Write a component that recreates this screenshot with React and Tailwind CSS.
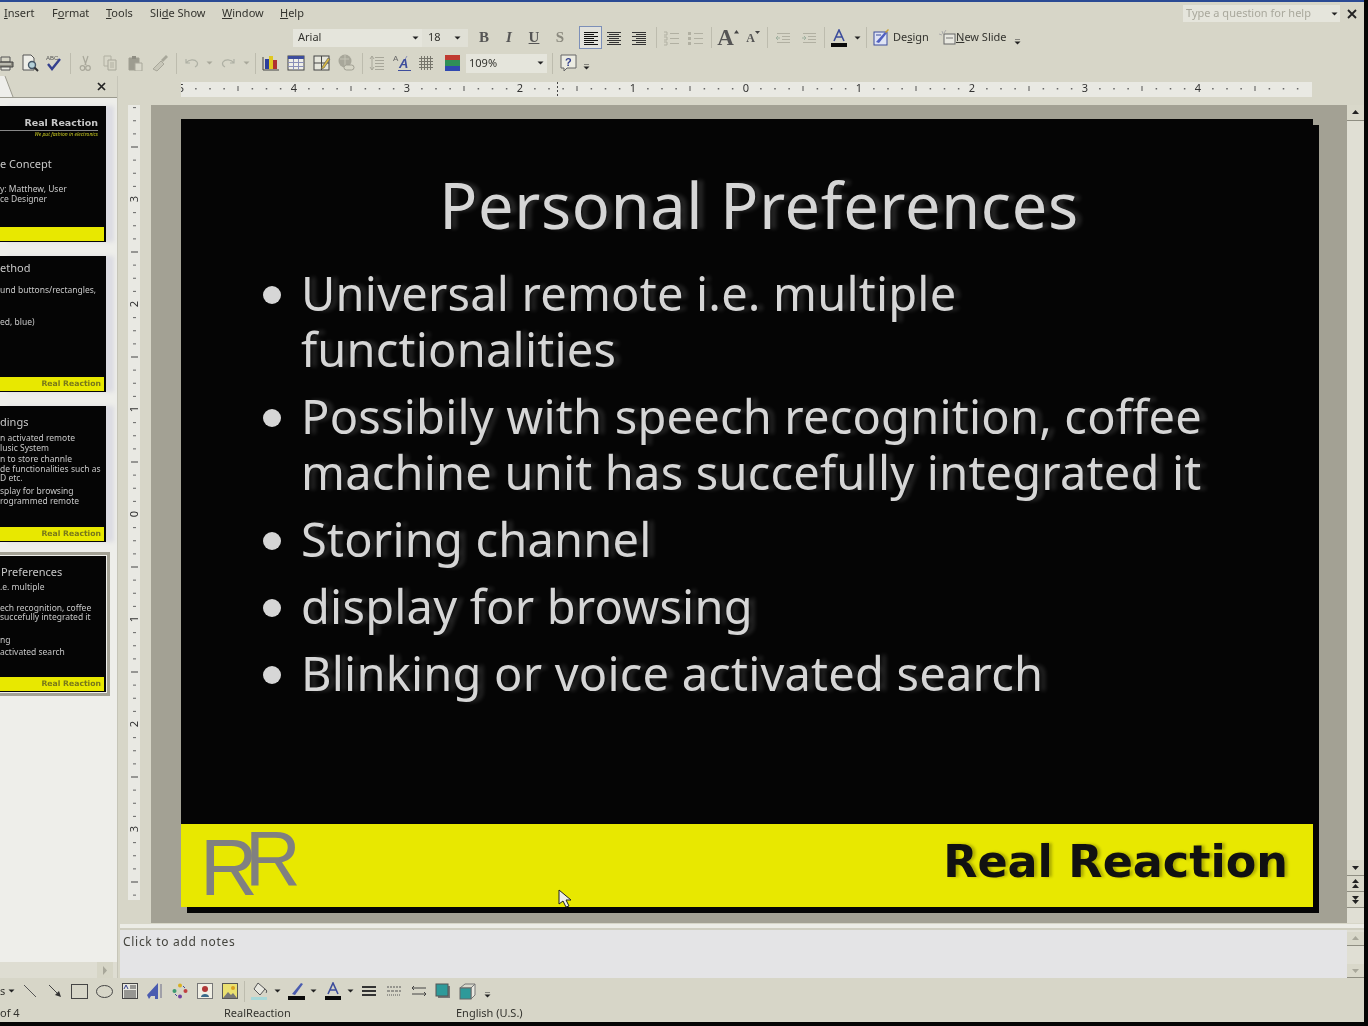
const Svg = ({ w = 16, h = 16, children }) => (
  <svg width={w} height={h} viewBox={`0 0 ${w} ${h}`} fill="none" className="shrink-0">{children}</svg>
)

const Drop = () => <Svg w={7} h={4}><path d="M0.5 0.5h6L3.5 3.5z" fill="#222" /></Svg>
const DropDim = () => <Svg w={7} h={4}><path d="M0.5 0.5h6L3.5 3.5z" fill="#a8a79a" /></Svg>
const More = () => <Svg w={7} h={6}><path d="M1 0h5" stroke="#333" /><path d="M0.5 2.5h6L3.5 5.5z" fill="#222" /></Svg>
const Sep = () => <div className="mx-auto h-[21px] w-px bg-[#bdbcae]" />

const Lines = ({ kind, color = "#333" }) => {
  const ys = [2, 4, 6, 8, 10, 12, 14]
  const x = i => (kind === "left" ? 1 : kind === "center" ? (i % 2 ? 3 : 1) : i % 2 ? 5 : 1)
  const x2 = i => (kind === "left" ? (i % 2 ? 11 : 15) : kind === "center" ? (i % 2 ? 13 : 15) : 15)
  return <Svg>{ys.map((y, i) => <path key={y} d={`M${x(i)} ${y + 0.5}H${x2(i)}`} stroke={color} />)}</Svg>
}
const ListIc = ({ dots }) => (
  <Svg>
    {[3, 8, 13].map(y => (
      <g key={y}>
        <path d={`M7 ${y + 0.5}H16`} stroke="#b1b0a2" />
        {dots ? <rect x="1" y={y - 1} width="3" height="3" fill="#b1b0a2" /> : <path d={`M1 ${y - 1}h3v3H1`} stroke="#b1b0a2" />}
      </g>
    ))}
  </Svg>
)
const IndentIc = ({ flip }) => (
  <Svg>
    {[3, 6, 9, 12].map(y => <path key={y} d={`M${y === 3 || y === 12 ? 2 : 7} ${y + 0.5}H15`} stroke="#b1b0a2" />)}
    <path d={flip ? "M1 8h4M3 6l2 2-2 2" : "M5 8H1M3 6L1 8l2 2"} stroke="#9fb09f" />
  </Svg>
)
const ColorA = ({ w = 16 }) => (
  <Svg w={w} h={18}>
    <path d="M3 12L8 1l5 11M5 8h6" stroke="#3d4d9c" strokeWidth="1.6" />
    <rect x="0" y="14" width="16" height="4" fill="#0a0a0a" />
  </Svg>
)
const Printer = () => (
  <Svg w={18} h={18}>
    <path d="M4 3h9v5H4z" fill="#d6d5c6" stroke="#555" />
    <path d="M1 8h15v5H1z" fill="#8c8b80" stroke="#444" />
    <path d="M4 13h9v3H4z" fill="#e8e8e0" stroke="#555" />
    <path d="M3 10h11" stroke="#e8e8e0" />
  </Svg>
)
const Preview = () => (
  <Svg w={18} h={18}>
    <path d="M2 1h8l3 3v12H2z" fill="#eeeee8" stroke="#555" />
    <circle cx="11" cy="11" r="3.5" fill="#b4d0d8" stroke="#456" strokeWidth="1.4" />
    <path d="M13.5 13.5L17 17" stroke="#333" strokeWidth="2" />
  </Svg>
)
const Spell = () => (
  <Svg w={18} h={18}>
    <text x="1" y="6" fontSize="6" fontFamily="Liberation Sans" fill="#555">ABC</text>
    <path d="M3 10l4 5 8-10" stroke="#34408e" strokeWidth="2.4" />
  </Svg>
)
const Cut = () => (
  <Svg>
    <path d="M6 1l3 9M11 1L8 10" stroke="#a8a79a" strokeWidth="1.2" />
    <circle cx="5.5" cy="13" r="2.3" stroke="#a8a79a" strokeWidth="1.2" />
    <circle cx="11" cy="13" r="2.3" stroke="#a8a79a" strokeWidth="1.2" />
  </Svg>
)
const Copy = () => (
  <Svg>
    <path d="M2 1h7v10H2z" stroke="#b1b0a2" />
    <path d="M6 5h8v10H6z" fill="#d6d5c6" stroke="#a8a79a" />
    <path d="M8 8h4M8 10h4M8 12h4" stroke="#b1b0a2" />
  </Svg>
)
const Paste = () => (
  <Svg>
    <path d="M2 3h10v12H2z" fill="#9d9c90" stroke="#a09f92" />
    <path d="M5 1h4v3H5z" fill="#8e8d82" />
    <path d="M8 8h7v8H8z" fill="#d8d7ca" stroke="#a8a79a" />
  </Svg>
)
const Painter = () => (
  <Svg w={18} h={18}>
    <path d="M2 15l8-8 3 3-7 7z" fill="#c8c7b9" stroke="#a8a79a" />
    <path d="M10 6l5-5 2 2-5 5z" fill="#a8a79a" />
  </Svg>
)
const Undo = ({ flip }) => (
  <Svg w={14} h={12}>
    <path d={flip ? "M13 2v4H9M13 6C10 2 4 2 2 5c-1 2 0 4 2 5" : "M1 2v4h4M1 6c3-4 9-4 11-1 1 2 0 4-2 5"} stroke="#aeb0a4" strokeWidth="1.2" />
  </Svg>
)
const Chart = () => (
  <Svg w={18} h={18}>
    <path d="M1 3v13h16" stroke="#444" />
    <rect x="3" y="5" width="4" height="10" fill="#2c3f9c" />
    <rect x="7" y="2" width="4" height="13" fill="#e0c820" />
    <rect x="11" y="6" width="4" height="9" fill="#b03030" />
  </Svg>
)
const TableIc = () => (
  <Svg w={18} h={16}>
    <rect x="1" y="1" width="16" height="14" fill="#efefe8" stroke="#444" />
    <rect x="1" y="1" width="16" height="3" fill="#3d4d9c" />
    <path d="M1 7.5h16M1 11.5h16M6.5 4v11M11.5 4v11" stroke="#8a8fb8" />
  </Svg>
)
const Tables = () => (
  <Svg w={18} h={18}>
    <rect x="1" y="2" width="15" height="14" fill="#e6e6dc" stroke="#444" />
    <path d="M8.5 2v14M1 9h15" stroke="#444" />
    <path d="M9 13l6-9 2 1-6 9-3 1z" fill="#d8b840" stroke="#555" strokeWidth=".6" />
  </Svg>
)
const Globe = () => (
  <Svg w={18} h={18}>
    <circle cx="8" cy="7" r="6.5" fill="#a8a79a" />
    <path d="M3 5h9M8 1v12" stroke="#c5c4b6" />
    <rect x="7" y="11" width="10" height="5" rx="2.5" fill="#d6d5c6" stroke="#a09f92" />
  </Svg>
)
const Spacing = () => (
  <Svg>
    {[2, 5, 8, 11, 14].map(y => <path key={y} d={`M6 ${y + 0.5}H15`} stroke="#a8a79a" />)}
    <path d="M3 1v14M1 4l2-3 2 3M1 12l2 3 2-3" stroke="#a8a79a" />
  </Svg>
)
const SizeA = () => (
  <Svg w={18} h={18}>
    <text x="0" y="7" fontSize="8" fontFamily="Liberation Sans" fill="#666">A</text>
    <path d="M7 14L14 2" stroke="#8a8fb8" />
    <text x="6" y="14" fontSize="13" fontWeight="700" fontStyle="italic" fontFamily="Liberation Sans" fill="#3d4d9c">A</text>
    <path d="M5 16.5h13" stroke="#3d4d9c" />
  </Svg>
)
const Grid3 = () => (
  <Svg>
    {[3, 6, 9, 12].map(v => <path key={v} d={`M${v + 0.5} 1v14M1 ${v + 0.5}h14`} stroke="#77766c" />)}
  </Svg>
)
const Swatch = () => (
  <Svg w={15} h={16}>
    <rect width="15" height="5" fill="#c03a30" />
    <rect y="5" width="15" height="6" fill="#2f8f58" />
    <rect y="11" width="15" height="5" fill="#3048b0" />
  </Svg>
)
const HelpIc = () => (
  <Svg w={17} h={19}>
    <path d="M1 1h15v13H7l-3 3v-3H1z" fill="#ecece2" stroke="#666" />
    <text x="5" y="12" fontSize="11" fontWeight="700" fontFamily="Liberation Sans" fill="#34408e">?</text>
  </Svg>
)
const DesignIc = () => (
  <Svg w={17} h={17}>
    <rect x="1" y="3" width="13" height="13" fill="#dfe4f4" stroke="#3d4d9c" />
    <path d="M3 13l9-10 2 1-8 10z" fill="#5060c0" />
    <path d="M12 3l3-3 1 1-3 3z" fill="#c8a030" />
    <path d="M3 6h5" stroke="#3d4d9c" />
  </Svg>
)
const NewSlideIc = () => (
  <Svg w={17} h={16}>
    <rect x="5" y="4" width="11" height="10" fill="#e8e8e0" stroke="#666" />
    <path d="M7 8h7" stroke="#777" />
    <path d="M3 1l1 3M0 4l3 1M7 0L5 3" stroke="#aaa" />
  </Svg>
)

const Slot = ({ className = "", children }) => (
  <div className={`flex h-full shrink-0 items-center justify-center ${className}`}>{children}</div>
)

function MenuBar() {
  return (
    <div className="flex h-[23px] shrink-0 items-center pl-1 text-[11px] text-[#33332e]">
      <div className="w-[48px]"><span className="underline">I</span>nsert</div>
      <div className="w-[54px]">F<span className="underline">o</span>rmat</div>
      <div className="w-[44px]"><span className="underline">T</span>ools</div>
      <div className="w-[72px]">Sli<span className="underline">d</span>e Show</div>
      <div className="w-[58px]"><span className="underline">W</span>indow</div>
      <div className="w-[40px]"><span className="underline">H</span>elp</div>
      <div className="ml-auto flex h-[17px] w-[157px] items-center justify-between bg-[#e5e5dc] pl-[3px] pr-[2px] text-[#a9a89c]">
        <span>Type a question for help</span>
        <Drop />
      </div>
      <div className="flex w-[24px] justify-center">
        <Svg w={10} h={10}><path d="M1 1l8 8M9 1L1 9" stroke="#222" strokeWidth="1.8" /></Svg>
      </div>
    </div>
  )
}

function FormatBar() {
  return (
    <div className="flex h-[25px] shrink-0 items-center pl-[293px] text-[11px] text-[#33332e]">
      <div className="flex h-[18px] w-[129px] items-center justify-between bg-[#e5e5dc] pl-[5px] pr-[3px]">
        <span>Arial</span>
        <Drop />
      </div>
      <div className="flex h-[18px] w-[46px] items-center justify-between bg-[#e0e0d6] pl-[6px] pr-[7px]">
        <span>18</span>
        <Drop />
      </div>
      <Slot className="w-[4px]" />
      <Slot className="w-[24px] font-['Liberation_Serif'] text-[15px] font-bold text-[#555]">B</Slot>
      <Slot className="w-[26px] font-['Liberation_Serif'] text-[15px] font-bold italic text-[#555]">I</Slot>
      <Slot className="w-[24px] font-['Liberation_Serif'] text-[15px] font-bold text-[#555] underline">U</Slot>
      <Slot className="w-[28px] font-['Liberation_Serif'] text-[15px] font-bold text-[#8a897e]">S</Slot>
      <div className="ml-[5px] flex h-[23px] w-[23px] shrink-0 items-center justify-center border border-[#7c8fb8] bg-[#e2e2dc]"><Lines kind="left" color="#111" /></div>
      <Slot className="w-[24px]"><Lines kind="center" /></Slot>
      <Slot className="w-[26px]"><Lines kind="right" /></Slot>
      <Slot className="w-[8px]"><Sep /></Slot>
      <Slot className="w-[22px]"><ListIc /></Slot>
      <Slot className="w-[26px]"><ListIc dots /></Slot>
      <Slot className="w-[6px]"><Sep /></Slot>
      <Slot className="w-[28px]">
        <span className="font-['Liberation_Serif'] text-[23px] font-bold leading-none text-[#555]">A</span>
        <Svg w={5} h={16}><path d="M0 3.5L2.5 0 5 3.5z" fill="#444" /></Svg>
      </Slot>
      <Slot className="w-[22px]">
        <span className="font-['Liberation_Serif'] text-[12px] font-bold leading-none text-[#555]">A</span>
        <Svg w={5} h={16}><path d="M0 1h5L2.5 4z" fill="#444" /></Svg>
      </Slot>
      <Slot className="w-[6px]"><Sep /></Slot>
      <Slot className="w-[26px]"><IndentIc /></Slot>
      <Slot className="w-[26px]"><IndentIc flip /></Slot>
      <Slot className="w-[4px]"><Sep /></Slot>
      <Slot className="w-[26px]"><ColorA /></Slot>
      <Slot className="w-[10px]"><Drop /></Slot>
      <Slot className="w-[8px]"><Sep /></Slot>
      <Slot className="ml-[3px] w-[17px]"><DesignIc /></Slot>
      <span className="ml-[3px] w-[46px]">De<span className="underline">s</span>ign</span>
      <Slot className="w-[17px]"><NewSlideIc /></Slot>
      <span className="w-[57px]"><span className="underline">N</span>ew Slide</span>
      <Slot className="w-[8px] pt-[8px]"><More /></Slot>
    </div>
  )
}

function StandardBar() {
  return (
    <div className="flex h-[26px] shrink-0 items-center overflow-hidden text-[11px] text-[#33332e]">
      <Slot className="ml-[-6px] w-[24px]"><Printer /></Slot>
      <Slot className="w-[24px]"><Preview /></Slot>
      <Slot className="w-[24px]"><Spell /></Slot>
      <Slot className="w-[8px]"><Sep /></Slot>
      <Slot className="w-[22px]"><Cut /></Slot>
      <Slot className="w-[28px]"><Copy /></Slot>
      <Slot className="w-[22px]"><Paste /></Slot>
      <Slot className="w-[28px]"><Painter /></Slot>
      <Slot className="w-[4px]"><Sep /></Slot>
      <Slot className="w-[28px]"><Undo /></Slot>
      <Slot className="w-[6px]"><DropDim /></Slot>
      <Slot className="w-[32px]"><Undo flip /></Slot>
      <Slot className="w-[4px]"><DropDim /></Slot>
      <Slot className="w-[15px]"><Sep /></Slot>
      <Slot className="w-[16px]"><Chart /></Slot>
      <Slot className="w-[34px]"><TableIc /></Slot>
      <Slot className="w-[18px]"><Tables /></Slot>
      <Slot className="w-[30px]"><Globe /></Slot>
      <Slot className="w-[2px]"><Sep /></Slot>
      <Slot className="w-[28px]"><Spacing /></Slot>
      <Slot className="w-[22px]"><SizeA /></Slot>
      <Slot className="w-[26px]"><Grid3 /></Slot>
      <Slot className="w-[26px]"><Swatch /></Slot>
      <div className="ml-px flex h-[19px] w-[81px] shrink-0 items-center justify-between bg-[#e5e5dc] pl-[3px] pr-[3px]">
        <span>109%</span>
        <Drop />
      </div>
      <Slot className="w-[10px]"><Sep /></Slot>
      <Slot className="w-[22px]"><HelpIc /></Slot>
      <Slot className="w-[14px] pt-[8px]"><More /></Slot>
    </div>
  )
}

function HRuler() {
  const ticks = []
  for (let i = -40; i <= 40; i++) {
    const x = 565 + i * 14.125
    if (x < 0 || x > 1128) continue
    if (i % 8 === 0) {
      ticks.push(<text key={i} x={x} y="10" fontSize="11" textAnchor="middle" fill="#333" fontFamily="Noto Sans">{Math.abs(i / 8)}</text>)
    } else if (i % 4 === 0) {
      ticks.push(<rect key={i} x={x} y="4" width="1" height="5" fill="#555" />)
    } else {
      ticks.push(<rect key={i} x={x} y="6" width="1.5" height="1.5" fill="#666" />)
    }
  }
  return (
    <svg width="1131" height="15" viewBox="0 0 1131 15" className="block bg-[#e9e9e3]">
      {ticks}
      <path d="M376.5 0v15" stroke="#444" strokeDasharray="2 2" />
    </svg>
  )
}

function VRuler() {
  const ticks = []
  for (let i = -32; i <= 30; i++) {
    const y = 409 + i * 13.125
    if (y < 0 || y > 790) continue
    if (i % 8 === 0) {
      ticks.push(<text key={i} x="6" y={y + 4} fontSize="11" textAnchor="middle" fill="#333" fontFamily="Noto Sans" transform={`rotate(-90 6 ${y})`}>{Math.abs(i / 8)}</text>)
    } else if (i % 4 === 0) {
      ticks.push(<rect key={i} x="3" y={y} width="7" height="1" fill="#444" />)
    } else {
      ticks.push(<rect key={i} x="5" y={y} width="3" height="1" fill="#666" />)
    }
  }
  return (
    <svg width="12" height="795" viewBox="0 0 12 795" className="ml-[8px] block bg-[#e9e9e3]">{ticks}</svg>
  )
}

const Btn = ({ d, dim, className = "h-[16px]" }) => (
  <div className={`flex shrink-0 items-center justify-center border-b border-[#8f8e82] bg-[#d9d8ca] ${className}`}>
    <Svg w={9} h={10}><path d={d} fill={dim ? "#a8a79a" : "#222"} /></Svg>
  </div>
)
const UP = "M4.5 2L8 6H1z"
const DOWN = "M1 3h7L4.5 7z"
const DBLUP = "M4.5 0L8 4H1zM4.5 5L8 9H1z"
const DBLDOWN = "M1 1h7L4.5 5zM1 5h7L4.5 9z"

const bullets = [
  ["Universal remote i.e. multiple", "functionalities"],
  ["Possibily with speech recognition, coffee", "machine unit has succefully integrated it"],
  ["Storing channel"],
  ["display for browsing"],
  ["Blinking or voice activated search"],
]

function Slide() {
  return (
    <div className="flex h-[788px] w-[1132px] flex-col bg-[#050505] font-['Noto_Sans'] text-[#d6d6d6] shadow-[6px_6px_0_#050505]">
      <h1 className="mt-[43px] pl-[24px] text-center text-[63px] font-normal leading-[86px] tracking-[0.7px] [text-shadow:6px_0_4px_rgba(255,255,255,.14)]">Personal Preferences</h1>
      <ul className="mt-[17px] flex flex-col gap-[11px] pl-[82px] text-[47px] leading-[56px] tracking-[0.2px] [text-shadow:6px_0_4px_rgba(255,255,255,.14)]">
        {bullets.map(lines => (
          <li key={lines[0]} className="flex">
            <span className="mt-[21px] h-[18px] w-[18px] shrink-0 rounded-full bg-[#d6d6d6]" />
            <div className="ml-[20px]">
              {lines.map(t => <div key={t} className="whitespace-nowrap">{t}</div>)}
            </div>
          </li>
        ))}
      </ul>
      <div className="mt-auto flex h-[83px] items-center justify-between bg-[#e8e800] pr-[25px]">
        <div className="relative ml-[19px] h-[83px] w-[100px] font-['Liberation_Sans'] text-[#808080]">
          <span className="absolute left-0 top-[-1px] text-[80px] leading-[90px]">R</span>
          <span className="absolute left-[45px] top-[-11px] text-[77px] leading-[90px]">R</span>
        </div>
        <div className="mb-[7px] font-['DejaVu_Sans'] text-[44.5px] font-bold leading-none text-[#111] [text-shadow:3px_0_3px_rgba(0,0,0,.25)]">Real Reaction</div>
      </div>
    </div>
  )
}

const T = ({ className = "", children }) => (
  <div className={`whitespace-nowrap text-[8.5px] leading-[10px] ${className}`}>{children}</div>
)
const H = ({ className = "", children }) => (
  <div className={`whitespace-nowrap text-[11px] leading-[14px] ${className}`}>{children}</div>
)
const Thumb = ({ selected, mark = true, children }) => (
  <div className={`flex h-[136px] w-[106px] flex-col overflow-hidden bg-[#050505] font-['Noto_Sans'] text-[#c8c8c8] ${selected ? "outline-[3px] outline-offset-[1px] outline-[#a3a194]" : "shadow-[8px_0_4px_#dcdce2]"}`}>
    {children}
    <div className="mb-px mr-[2px] mt-auto flex h-[14px] shrink-0 items-center justify-end bg-[#e8e800] pr-[3px] font-['DejaVu_Sans'] text-[7.7px] font-bold text-[#77771a]">
      {mark ? "Real Reaction" : ""}
    </div>
  </div>
)

function Panel() {
  return (
    <div className="flex w-[118px] shrink-0 flex-col border-r border-[#c6c5b8]">
      <div className="flex h-[22px] shrink-0 items-center justify-between border-b border-[#9b9a8e] pr-[11px]">
        <Svg w={14} h={21}><path d="M0 0h5l8 21H0z" fill="#eeeeea" /><path d="M5 0l8 21" stroke="#9b9a8e" /></Svg>
        <Svg w={9} h={9}><path d="M1 1l7 7M8 1L1 8" stroke="#222" strokeWidth="1.7" /></Svg>
      </div>
      <div className="flex min-h-0 flex-1 flex-col gap-[14px] overflow-hidden bg-[#eeeeea] pt-[8px]">
        <Thumb mark={false}>
          <div className="mt-[11px] whitespace-nowrap pr-[8px] text-right font-['DejaVu_Sans'] text-[9.5px] font-bold leading-[12px]">Real Reaction</div>
          <div className="mr-[8px] mt-px h-px shrink-0 bg-[#888]" />
          <div className="whitespace-nowrap pr-[8px] text-right text-[5px] italic leading-[6px] text-[#c8c820]">We put fashion in electronics</div>
          <H className="mt-[20px]">e Concept</H>
          <T className="mt-[13px]">y: Matthew, User</T>
          <T>ce Designer</T>
        </Thumb>
        <Thumb>
          <H className="mt-[5px]">ethod</H>
          <T className="mt-[10px]">und buttons/rectangles,</T>
          <T className="mt-[22px]">ed, blue)</T>
        </Thumb>
        <Thumb>
          <H className="mt-[9px]">dings</H>
          <T className="mt-[4px]">n activated remote</T>
          <T>lusic System</T>
          <T className="mt-px">n to store channle</T>
          <T>de functionalities such as</T>
          <T className="mt-[-1px]">D etc.</T>
          <T className="mt-[3px]">splay for browsing</T>
          <T>rogrammed remote</T>
        </Thumb>
        <Thumb selected>
          <H className="ml-px mt-[9px]">Preferences</H>
          <T className="mt-[3px]">.e. multiple</T>
          <T className="mt-[11px]">ech recognition, coffee</T>
          <T className="mt-[-1px]">succefully integrated it</T>
          <T className="mt-[13px]">ng</T>
          <T className="mt-[2px]">activated search</T>
        </Thumb>
      </div>
      <div className="flex h-[16px] shrink-0 justify-end bg-[#deddd2] pr-[4px]">
        <div className="flex w-[16px] items-center justify-center bg-[#d6d5c6]">
          <Svg w={6} h={9}><path d="M1 0l4 4.5L1 9z" fill="#a8a79a" /></Svg>
        </div>
      </div>
    </div>
  )
}

function DrawBar() {
  return (
    <div className="flex h-[26px] shrink-0 items-center overflow-hidden text-[11px] text-[#33332e]">
      <span className="w-[7px]">s</span>
      <Slot className="w-[8px]"><Drop /></Slot>
      <Slot className="w-[30px]"><Svg><path d="M2 2l12 12" stroke="#555" /></Svg></Slot>
      <Slot className="w-[20px]"><Svg><path d="M2 2l9 9" stroke="#444" /><path d="M14 14l-6-2 4-4z" fill="#333" /></Svg></Slot>
      <Slot className="w-[29px]"><Svg w={17} h={15}><rect x=".5" y=".5" width="16" height="14" stroke="#444" /></Svg></Slot>
      <Slot className="w-[21px]"><Svg w={17} h={13}><ellipse cx="8.5" cy="6.5" rx="8" ry="6" stroke="#444" /></Svg></Slot>
      <Slot className="w-[29px]">
        <Svg w={16} h={16}>
          <rect x=".5" y=".5" width="15" height="15" fill="#e8e8e0" stroke="#444" />
          <path d="M8 3h6M8 5h6M2 8h12M2 10h12M2 12h12M2 14h12" stroke="#444" />
          <path d="M2 6l2-4 2 4" stroke="#34408e" />
        </Svg>
      </Slot>
      <Slot className="w-[21px]">
        <Svg w={18} h={18}><path d="M1 13L12 1v16h-3v-3H5l-2 3z" fill="#4a5cb0" /><path d="M15 2v14" stroke="#a0a0a8" strokeWidth="2" /></Svg>
      </Slot>
      <Slot className="w-[29px]">
        <Svg>
          <circle cx="8" cy="2.5" r="2" fill="#d8b020" />
          <circle cx="2.5" cy="8" r="2" fill="#3d9a70" />
          <circle cx="13.5" cy="8" r="2" fill="#c04040" />
          <circle cx="8" cy="13.5" r="2" fill="#7040a0" />
          <path d="M11 3l2 2M3 11l2 2" stroke="#3d4d9c" />
        </Svg>
      </Slot>
      <Slot className="w-[21px]">
        <Svg>
          <rect x=".5" y=".5" width="15" height="15" fill="#f0efe4" stroke="#777" />
          <circle cx="8" cy="6" r="3" fill="#b03838" />
          <path d="M4 14c0-4 8-4 8 0z" fill="#3a6a8a" />
        </Svg>
      </Slot>
      <Slot className="w-[29px]">
        <Svg>
          <rect x=".5" y=".5" width="15" height="15" fill="#eae070" stroke="#555" />
          <path d="M1 15l5-6 3 3 2-2 4 5z" fill="#777" />
          <circle cx="11" cy="5" r="2" fill="#d8a020" />
        </Svg>
      </Slot>
      <Slot className="w-[1px]"><Sep /></Slot>
      <Slot className="ml-[4px] w-[22px]">
        <Svg w={18} h={18}>
          <path d="M7 1l7 6-5 6-6-6z" fill="#e8e8e0" stroke="#555" />
          <path d="M14 7c2 1 2 3 1 4" stroke="#555" />
          <rect x="0" y="15" width="16" height="3" fill="#a8d8d8" />
        </Svg>
      </Slot>
      <Slot className="w-[12px]"><Drop /></Slot>
      <Slot className="w-[26px]">
        <Svg w={17} h={18}>
          <path d="M4 12L13 1l2 1-8 11z" fill="#4a5cb0" />
          <rect x="0" y="14" width="17" height="4" fill="#0a0a0a" />
        </Svg>
      </Slot>
      <Slot className="w-[8px]"><Drop /></Slot>
      <Slot className="w-[32px]"><ColorA w={16} /></Slot>
      <Slot className="w-[2px]"><Drop /></Slot>
      <Slot className="ml-[3px] w-[30px]">
        <Svg><path d="M1 4h14M1 8h14M1 12h14" stroke="#333" strokeWidth="2" /></Svg>
      </Slot>
      <Slot className="w-[20px]">
        <Svg><path d="M1 4h14" stroke="#555" strokeDasharray="2 1" /><path d="M1 8h14" stroke="#555" strokeDasharray="3 1" /><path d="M1 12h14" stroke="#555" strokeDasharray="1 1" /></Svg>
      </Slot>
      <Slot className="w-[30px]">
        <Svg><path d="M1 5h14M3 3L1 5l2 2M1 11h14M13 9l2 2-2 2" stroke="#444" /></Svg>
      </Slot>
      <Slot className="w-[18px]">
        <Svg><rect x="3" y="3" width="12" height="12" fill="#777" /><rect x="1" y="1" width="12" height="12" fill="#2e9a9a" stroke="#555" /></Svg>
      </Slot>
      <Slot className="w-[32px]">
        <Svg w={18} h={18}>
          <path d="M1 6l5-4h10l-4 4z" fill="#d8d8cc" stroke="#777" />
          <path d="M12 6l4-4v11l-4 4z" fill="#e8e8e0" stroke="#777" />
          <rect x="1" y="6" width="11" height="11" fill="#2e9a9a" stroke="#666" />
        </Svg>
      </Slot>
      <Slot className="w-[6px] pt-[8px]"><More /></Slot>
    </div>
  )
}

function StatusBar() {
  return (
    <div className="flex h-[18px] shrink-0 items-center text-[11px] text-[#33332e]">
      <span className="w-[224px]">of 4</span>
      <span className="w-[232px]">RealReaction</span>
      <span>English (U.S.)</span>
    </div>
  )
}

export default function App() {
  return (
    <div className="relative flex h-[1026px] w-[1368px] flex-col overflow-hidden bg-[#050505] font-['Noto_Sans'] blur-[0.5px]">
      <div className="flex h-[1022px] w-[1364px] shrink-0 flex-col bg-[#d7d6c8]">
        <div className="h-[2px] shrink-0 bg-[#2a4a94]" />
        <MenuBar />
        <FormatBar />
        <StandardBar />
        <div className="flex h-[902px] shrink-0">
          <Panel />
          <div className="ml-[2px] flex min-w-0 flex-1 flex-col">
            <div className="h-[29px] shrink-0 pl-[61px] pt-[6px]"><HRuler /></div>
            <div className="flex h-[818px] shrink-0">
              <div className="w-[31px] shrink-0"><VRuler /></div>
              <div className="w-[1196px] shrink-0 bg-[#a3a194] pl-[30px] pt-[14px]"><Slide /></div>
              <div className="flex w-[17px] shrink-0 flex-col bg-[#e0dfd4]">
                <Btn d={UP} />
                <div className="flex-1" />
                <Btn d={DOWN} />
                <Btn d={DBLUP} />
                <Btn d={DBLDOWN} />
                <div className="h-[15px] shrink-0" />
              </div>
            </div>
            <div className="h-[7px] shrink-0 border-t border-b-2 border-[#d7d6c8] border-b-[#cfcec0] bg-[#ecece6]" />
            <div className="flex h-[48px] shrink-0">
              <div className="w-[1227px] shrink-0 bg-[#e4e4e6] pl-[3px] pt-[3px] text-[12px] tracking-[0.7px] text-[#44443e]">Click to add notes</div>
              <div className="flex w-[17px] shrink-0 flex-col bg-[#e0dfd4] pt-[2px]">
                <Btn d={UP} dim className="h-[14px]" />
                <div className="flex-1" />
                <Btn d={DOWN} dim className="h-[14px]" />
              </div>
            </div>
          </div>
        </div>
        <DrawBar />
        <StatusBar />
      </div>
      <div className="absolute left-[558px] top-[889px]">
        <Svg w={15} h={20}><path d="M1 1v14l4-3 3 6 3-1-3-6h5z" fill="#eee" stroke="#222" /></Svg>
      </div>
      <div className="absolute right-0 top-0 h-[1026px] w-[4px] bg-[#050505]" />
    </div>
  )
}
